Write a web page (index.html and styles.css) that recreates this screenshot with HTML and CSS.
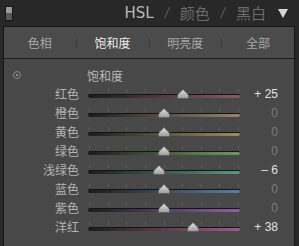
FILE: index.html
```html
<!DOCTYPE html>
<html lang="zh-CN">
<head>
  <meta charset="UTF-8">
  <title>HSL</title>
  <link rel="stylesheet" href="styles.css">
</head>
<body>
  <div class="header">
    <div class="switch"><span class="switch-top"></span></div>
    <div class="titles">
      <span class="t-on">HSL</span>
      <span class="sep">/</span>
      <span class="t-off">颜色</span>
      <span class="sep">/</span>
      <span class="t-off">黑白</span>
    </div>
    <svg class="arrow" width="10" height="9" viewBox="0 0 10 9"><path d="M0 0 L10 0 L5 9 Z" fill="#d4d4d4"/></svg>
  </div>

  <div class="panel">
    <div class="tabs">
      <span class="tab">色相</span>
      <span class="bar"></span>
      <span class="tab active">饱和度</span>
      <span class="bar"></span>
      <span class="tab">明亮度</span>
      <span class="bar"></span>
      <span class="tab">全部</span>
    </div>

    <div class="content">
      <div class="title-row">
        <span class="target"></span>
        <span class="title">饱和度</span>
      </div>
      <div id="rows"></div>
    </div>
  </div>

  <script>
    const colors = [
      ["红色", 25, "#8a5a60"],
      ["橙色", 0, "#9a8266"],
      ["黄色", 0, "#988e62"],
      ["绿色", 0, "#6e9a5e"],
      ["浅绿色", -6, "#5c9486"],
      ["蓝色", 0, "#5a7ea0"],
      ["紫色", 0, "#8a62a2"],
      ["洋红", 38, "#a05a88"]
    ];

    function buildRows() {
      const rows = document.getElementById("rows");
      let html = "";
      for (const [name, value, color] of colors) {
        const left = 76 + value * 0.76 - 6;
        let text = "0";
        if (value > 0) text = "+ " + value;
        if (value < 0) text = "\u2013 " + (-value);
        let ticks = "";
        for (let i = 0; i < 9; i++) ticks += "<i></i>";
        html += `<div class="row">
          <span class="label">${name}</span>
          <div class="slider">
            <div class="ticks">${ticks}</div>
            <div class="track" style="background: linear-gradient(to right, #1c1c1c, ${color})"></div>
            <svg class="thumb" style="left:${left}px" width="12" height="10" viewBox="0 0 12 10">
              <defs><linearGradient id="g" x1="0" y1="0" x2="0" y2="1">
                <stop offset="0" stop-color="#e4e4e4"/><stop offset="1" stop-color="#9a9a9a"/>
              </linearGradient></defs>
              <path d="M0.5 9.5 L0.5 7 Q0.5 5 2.5 4 L6 0.5 L9.5 4 Q11.5 5 11.5 7 L11.5 9.5 Z" fill="url(#g)" stroke="#555" stroke-width="0.6"/>
            </svg>
          </div>
          <span class="value ${value === 0 ? 'zero' : ''}">${text}</span>
        </div>`;
      }
      rows.innerHTML = html;
    }

    buildRows();
  </script>
</body>
</html>
```

FILE: styles.css
```css
body {
  margin: 0;
  background-color: #282828;
  font-family: "Noto Sans CJK SC", "Liberation Sans", sans-serif;
  width: 299px;
  height: 246px;
  overflow: hidden;
}
.header {
  height: 26px;
  display: flex;
  align-items: center;
}
.switch {
  width: 6px;
  height: 13px;
  margin-left: 5px;
  border: 1px solid #161616;
  background-color: #5a5a5a;
  display: flex;
  flex-direction: column;
}
.switch-top {
  height: 6px;
  background-color: #9a9a9a;
}
.titles {
  flex: 1;
  display: flex;
  justify-content: flex-end;
  align-items: center;
  font-size: 15px;
  line-height: 26px;
  gap: 10px;
}
.t-on {
  color: #b8b8b8;
  font-family: "DejaVu Sans", sans-serif;
  font-size: 15px;
}
.t-off {
  color: #6a6a6a;
}
.sep {
  color: #585858;
  font-family: "Liberation Sans", sans-serif;
  font-style: italic;
  margin: 0 1px;
}
.arrow {
  margin: 0 11px 0 12px;
}
.panel {
  margin: 0 4px 0 3px;
  border: 1px solid #151515;
  border-bottom: none;
  background-color: #484848;
  height: 220px;
}
.tabs {
  height: 31px;
  background-color: #4b4b4b;
  border-bottom: 1px solid #1c1c1c;
  display: flex;
  align-items: center;
  font-size: 12px;
}
.tab {
  flex: 1;
  text-align: center;
  color: #a8a8a8;
}
.tab.active {
  color: #ececec;
}
.bar {
  width: 1px;
  height: 10px;
  background-color: #3a3a3a;
}
.content {
  padding-top: 8px;
}
.title-row {
  height: 16px;
  display: flex;
  align-items: center;
  font-size: 12px;
  color: #b8b8b8;
}
.target {
  width: 6px;
  height: 6px;
  margin-left: 9px;
  border: 1px solid #8a8a8a;
  border-radius: 50%;
  position: relative;
}
.target::after {
  content: "";
  position: absolute;
  left: 2px;
  top: 2px;
  width: 2px;
  height: 2px;
  background-color: #8a8a8a;
}
.title {
  margin-left: 66px;
}
#rows {
  padding-top: 1px;
}
.row {
  height: 19px;
  display: flex;
  align-items: center;
}
.label {
  width: 75px;
  text-align: right;
  font-size: 12px;
  color: #b4b4b4;
}
.slider {
  width: 152px;
  height: 12px;
  margin-left: 9px;
  position: relative;
}
.ticks {
  display: flex;
  justify-content: space-between;
  height: 3px;
  padding: 0 1px;
  margin-top: 1px;
}
.ticks i {
  width: 1px;
  background-color: #5e5e5e;
}
.track {
  height: 3px;
  margin-top: 2px;
  border-radius: 2px;
  border-top: 1px solid #141414;
}
.thumb {
  position: absolute;
  top: 1px;
}
.value {
  width: 38px;
  text-align: right;
  font-family: "Liberation Sans", sans-serif;
  font-size: 12px;
  color: #e2e2e2;
}
.value.zero {
  color: #7a7a7a;
}
```
